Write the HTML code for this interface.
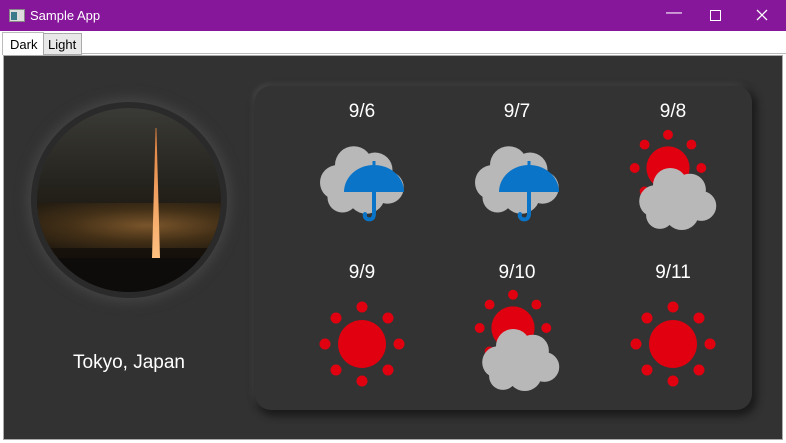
<!DOCTYPE html><html><head><style>
body{margin:0;width:786px;height:443px;overflow:hidden;background:#fff;font-family:"Liberation Sans",sans-serif;position:relative}
.title{position:absolute;left:0;top:0;width:786px;height:31px;background:#86169a;color:#fff;font-size:13px}
.title span{position:absolute;left:30px;top:8px}
.tabs{position:absolute;top:31px;left:0;width:786px;height:24px;background:#fff}
.tab{position:absolute;font-size:13px;color:#000}
.content{position:absolute;left:3px;top:55px;width:778px;height:383px;background:#323232;border:1px solid #aaa}
.d{position:absolute;color:#fff;font-size:19px;width:100px;text-align:center}
</style></head><body>
<div class="title"><svg style="position:absolute;left:9px;top:9px" width="16" height="13"><rect x="0.5" y="0.5" width="15" height="12" fill="#ddd" stroke="#888"/><rect x="2" y="3" width="6" height="8" fill="#3a7a8a"/></svg><span>Sample App</span>
<span style="left:666px;top:4px;font-size:16px">—</span>
<svg style="position:absolute;left:710px;top:10px" width="11" height="11"><rect x="0.5" y="0.5" width="10" height="10" fill="none" stroke="#fff"/></svg>
<svg style="position:absolute;left:756px;top:9px" width="12" height="12"><path d="M1 1L11 11M11 1L1 11" stroke="#fff" stroke-width="1.3"/></svg></div>
<div class="tabs">
<div class="tab" style="left:2px;top:1px;width:40px;height:22px;border:1px solid #bbb;border-bottom:none;background:#fff"><span style="position:absolute;left:7px;top:4px">Dark</span></div>
<div class="tab" style="left:43px;top:2px;width:37px;height:20px;border:1px solid #aaa;background:#e8e8e8"><span style="position:absolute;left:4px;top:3px">Light</span></div>
<div style="position:absolute;left:82px;right:0;top:22px;border-top:1px solid #bbb"></div>
</div>
<div class="content">
<div style="position:absolute;left:27px;top:46px;width:196px;height:196px;border-radius:50%;background:#2a2a2a;box-shadow:0 0 12px 4px #444"></div>
<div style="position:absolute;left:33px;top:52px;width:184px;height:184px;border-radius:50%;overflow:hidden;background:linear-gradient(#3a3a36,#26241e 40%,#1a140c 70%,#0c0a08)">
<div style="position:absolute;left:0;top:95px;width:184px;height:45px;background:radial-gradient(ellipse at 60% 50%,#8a6030,#4a3418 50%,#201a10);opacity:.85"></div>
<div style="position:absolute;left:115px;top:20px;width:8px;height:130px;background:linear-gradient(#e08040,#ffc080);clip-path:polygon(45% 0,55% 0,100% 100%,0 100%)"></div>
<div style="position:absolute;left:0;top:150px;width:184px;height:40px;background:#0e0c0a"></div>
</div>
<div style="position:absolute;left:0;top:296px;width:250px;text-align:center;color:#fff;font-size:19px">Tokyo, Japan</div>
<div style="position:absolute;left:251px;top:30px;width:497px;height:324px;border-radius:16px;background:#333;box-shadow:3px 4px 8px 2px #1a1a1a,-2px -2px 6px #4a4a4a"></div>
<div class="d" style="left:308px;top:45px">9/6</div>
<div class="d" style="left:463px;top:45px">9/7</div>
<div class="d" style="left:619px;top:45px">9/8</div>
<div class="d" style="left:308px;top:206px">9/9</div>
<div class="d" style="left:463px;top:206px">9/10</div>
<div class="d" style="left:619px;top:206px">9/11</div>
<svg width="778" height="383" style="position:absolute;left:0;top:0">
<defs>
<g id="cl"><circle cx="-18" cy="2" r="14"/><circle cx="-5" cy="-12" r="15"/><circle cx="12" cy="-8" r="14"/><circle cx="22" cy="6" r="13"/><circle cx="5" cy="12" r="15"/><circle cx="-14" cy="14" r="12"/><circle cx="2" cy="2" r="16"/></g>
<g id="um"><path d="M-30 5A30 27 0 0 1 30 5Z" fill="#0a74c8"/><rect x="-1.5" y="-26" width="3" height="6" fill="#0a74c8"/><path d="M0 5V26Q0 34-7 32Q-10 30-9 27" stroke="#0a74c8" stroke-width="4" fill="none" stroke-linecap="round"/></g>
<g id="sun" fill="#e0000f"><circle r="24"/><circle cx="0" cy="-37" r="5.5"/><circle cx="0" cy="37" r="5.5"/><circle cx="-37" cy="0" r="5.5"/><circle cx="37" cy="0" r="5.5"/><circle cx="-26" cy="-26" r="5.5"/><circle cx="26" cy="-26" r="5.5"/><circle cx="-26" cy="26" r="5.5"/><circle cx="26" cy="26" r="5.5"/></g>
</defs>
<g transform="translate(356,124) scale(1.25)" fill="#b8b8b8"><use href="#cl"/></g>
<g transform="translate(370,131)"><use href="#um"/></g>
<g transform="translate(511,124) scale(1.25)" fill="#b8b8b8"><use href="#cl"/></g>
<g transform="translate(525,131)"><use href="#um"/></g>
<g transform="translate(664,112) scale(0.9)"><use href="#sun"/></g>
<g transform="translate(672,143) scale(1.15)" fill="#b8b8b8"><use href="#cl"/></g>
<g transform="translate(358,288)"><use href="#sun"/></g>
<g transform="translate(509,272) scale(0.9)"><use href="#sun"/></g>
<g transform="translate(515,304) scale(1.15)" fill="#b8b8b8"><use href="#cl"/></g>
<g transform="translate(669,288)"><use href="#sun"/></g>
</svg>
</div>
</body></html>
